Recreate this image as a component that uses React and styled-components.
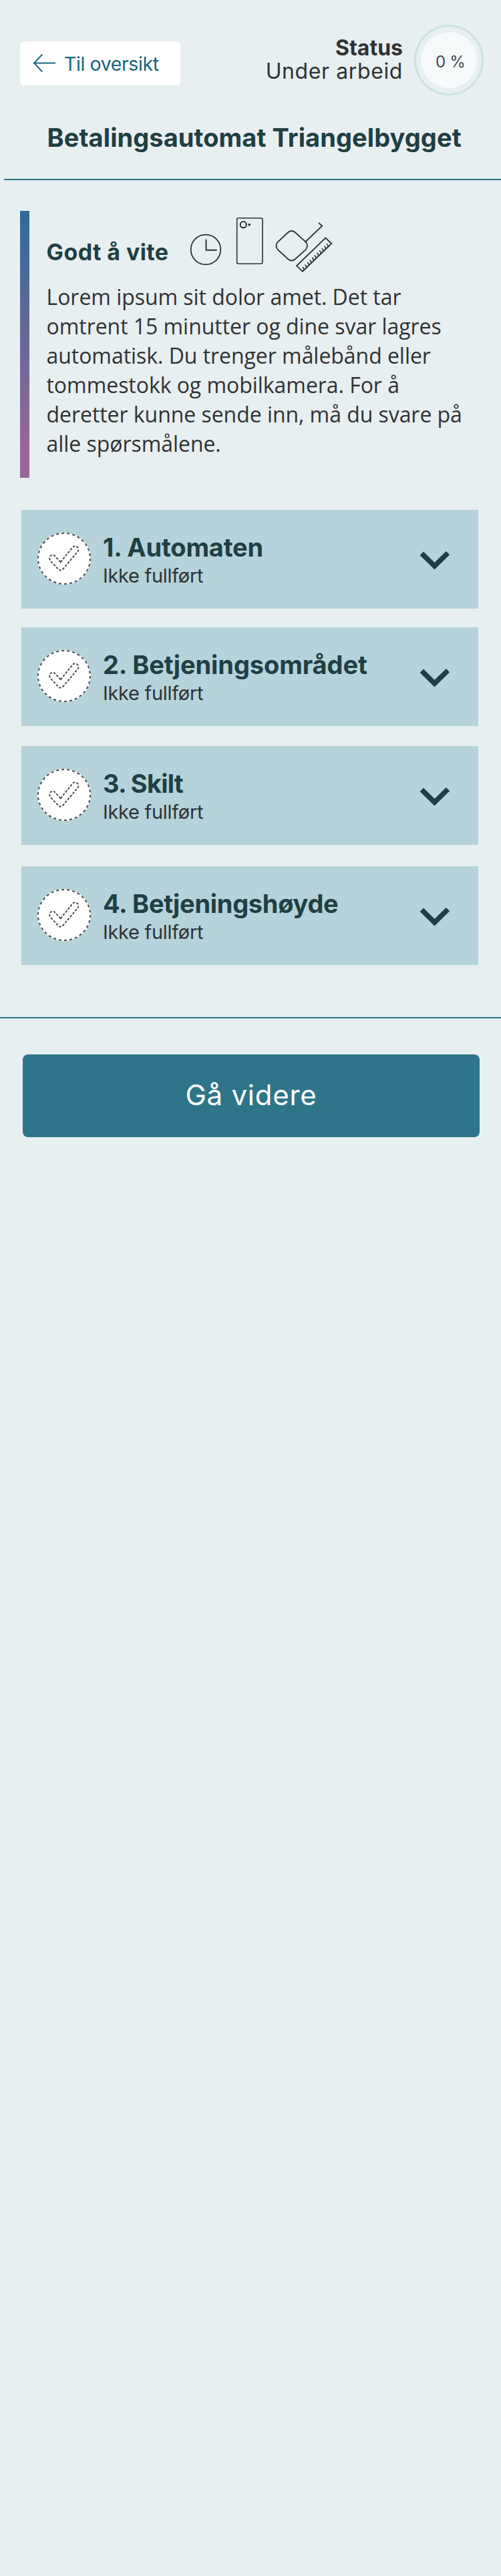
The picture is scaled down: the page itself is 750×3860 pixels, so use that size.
import React from "react";
import styled, { createGlobalStyle } from "styled-components";

const display = `"Inter", "Liberation Sans", sans-serif`;
const bodyFont = `"Open Sans", "Noto Sans", sans-serif`;

const color = {
  page: "#e7eff1",
  panel: "#b6d2da",
  teal: "#2e758a",
  link: "#11677f",
  heading: "#203f43",
  text: "#303233",
};

const GlobalStyle = createGlobalStyle`
  * { box-sizing: border-box; }
  body { margin: 0; background: ${color.page}; }
  svg { display: block; flex: none; }
`;

const Page = styled.main`
  min-height: 3860px;
  background: ${color.page};
  color: ${color.text};
  font-family: ${display};
`;

const TopBar = styled.header`
  display: flex;
  align-items: flex-start;
  height: 143px;
  padding: 37px 26px 0 30px;
`;

const BackButton = styled.button`
  display: flex;
  align-items: center;
  width: 240px;
  height: 66px;
  margin-top: 25px;
  padding: 0 0 0 19px;
  gap: 12px;
  border: 0;
  border-radius: 6px;
  background: #fff;
  color: ${color.link};
  font: 400 28.5px/40px ${display};
  letter-spacing: -0.4px;
  white-space: nowrap;
`;

const BackLabel = styled.span`
  padding-top: 2px;
`;

const Status = styled.div`
  display: flex;
  flex-direction: column;
  align-items: flex-end;
  margin: 18px 17px 0 auto;
  font-size: 32px;
  line-height: 34.5px;
`;

const StatusTitle = styled.strong`
  font-weight: 700;
`;

const StatusValue = styled.span`
  letter-spacing: 0.6px;
`;

const Ring = styled.div`
  display: flex;
  flex: none;
  width: 104px;
  height: 106px;
  padding: 8px 7px;
  border: 3px solid #c9e2e4;
  border-radius: 50%;
`;

const RingCore = styled.div`
  display: flex;
  flex: 1;
  align-items: center;
  justify-content: center;
  padding: 5px 0 0 4px;
  border-radius: 50%;
  background: #f6fafb;
  color: #4a4b4c;
  font-size: 24px;
  letter-spacing: -0.9px;
  word-spacing: 1px;
  white-space: nowrap;
`;

const Title = styled.h1`
  margin: 40px 0 39px;
  padding-left: 70.5px;
  color: ${color.heading};
  font-size: 38px;
  font-weight: 700;
  line-height: 46px;
  letter-spacing: 0.08px;
  white-space: nowrap;
`;

const Rule = styled.hr`
  height: 2px;
  margin: 0 0 0 ${(p) => p.$inset || 0}px;
  border: 0;
  background: ${color.teal};
`;

const Info = styled.section`
  display: flex;
  height: 400px;
  margin: 46px 0 0 30px;
`;

const InfoAccent = styled.div`
  flex: none;
  width: 14px;
  background: linear-gradient(#2f6a9a, #9b6699 92%);
`;

const InfoBody = styled.div`
  padding-left: 25.5px;
`;

const InfoHead = styled.div`
  display: flex;
  align-items: flex-start;
  height: 106.5px;
`;

const InfoTitle = styled.h2`
  width: 214.5px;
  margin: 42px 0 0;
  color: ${color.heading};
  font-size: 34px;
  font-weight: 700;
  line-height: 40px;
  letter-spacing: 0.4px;
  white-space: nowrap;
`;

const InfoText = styled.p`
  margin: 0;
  font: 400 32px/44px ${bodyFont};
  letter-spacing: -0.05px;
  white-space: nowrap;
`;

const Sections = styled.div`
  display: flex;
  flex-direction: column;
  padding: 48px 34px 78px 32px;
`;

const Section = styled.section`
  display: flex;
  align-items: flex-start;
  height: 148px;
  margin-bottom: ${(p) => p.$after}px;
  padding: 34px 42px 0 24px;
  background: ${color.panel};
`;

const SectionText = styled.div`
  flex: 1;
  padding-left: 18px;
`;

const SectionTitle = styled.h3`
  margin: 0;
  color: ${color.heading};
  font-size: 38px;
  font-weight: 700;
  line-height: 45px;
  letter-spacing: ${(p) => p.$tracking}px;
  white-space: nowrap;
`;

const SectionState = styled.div`
  padding-top: 2px;
  font-size: 29px;
  line-height: 36px;
  letter-spacing: -0.3px;
`;

const ChevronSlot = styled.div`
  padding-top: 27px;
`;

const NextButton = styled.button`
  display: flex;
  align-items: center;
  justify-content: center;
  width: 684px;
  height: 124px;
  margin: 54px 0 0 34px;
  padding: 0 0 2px;
  border: 0;
  border-radius: 8px;
  background: ${color.teal};
  color: #fff;
  font: 400 42px/52px ${display};
  letter-spacing: 0.75px;
`;

const ArrowLeft = () => (
  <svg width="35" height="28" viewBox="0 0 35 28" fill="none" stroke={color.link} strokeWidth="1.9">
    <path d="M34 13.500H2M14.300 0.500L2 13.500l12.300 13" />
  </svg>
);

const ClockIcon = styled(({ className }) => (
  <svg className={className} width="48" height="48" viewBox="0 0 48 48" fill="none" stroke={color.text} strokeWidth="1.8">
    <circle cx="24" cy="24" r="22.300" />
    <path d="M24.500 9.500v15.300H40" strokeLinecap="round" strokeWidth="2" />
  </svg>
))`
  margin-top: 34px;
`;

const PhoneIcon = styled(({ className }) => (
  <svg className={className} width="42" height="72" viewBox="0 0 42 72" fill="none" stroke={color.text}>
    <rect x="1.700" y="1.700" width="38.300" height="68.500" rx="2.500" strokeWidth="1.600" />
    <circle cx="11.300" cy="11.700" r="4.600" strokeWidth="2" />
    <circle cx="20.200" cy="11.700" r="1.900" fill={color.text} stroke="none" />
  </svg>
))`
  margin: 9px 0 0 21px;
`;

const teeth = Array.from({ length: 11 }, (_, i) => i);

const ToolsIcon = styled(({ className }) => (
  <svg className={className} width="90" height="84" viewBox="410 326 90 84" fill="none" stroke={color.text} strokeWidth="1.8">
    <path d="M431.500 348L415.600 362.800Q411.300 368.300 415.600 373.800L431.500 388.500Q436.500 392.600 441.500 388.500L458 373.800Q462 368.300 458 362.800L441.500 348Q436.500 343.900 431.500 348Z" />
    <path d="M456.500 363L482.300 338.500L477 334" />
    <path d="M487.300 356.500L496.300 365L453 406.700L444 398.300Z" />
    {teeth.map((i) => (
      <path key={i} d={`M${454.5 + i * 3.6} ${404.8 - i * 3.48}q1.200 -3.200 -1.700 -4.600`} strokeWidth="1.600" />
    ))}
  </svg>
))`
  margin: 10px 0 0 15px;
`;

const CheckBadge = () => (
  <svg width="80" height="78" viewBox="0 0 80 78" fill="none" stroke="#4c4c4c" strokeWidth="2">
    <ellipse cx="40" cy="39" rx="40" ry="39" fill="#fff" stroke="none" />
    <ellipse cx="40" cy="39" rx="39" ry="38" strokeDasharray="4 4.060" />
    <path
      d="M34.700 44.300L52.500 22.300C57.500 17 64.500 23.500 60 29L38.500 54.500C36 57.200 33.500 57.200 31 54.800L20 43C14.500 36.500 22.500 30.500 26.500 35.500Z"
      strokeDasharray="3.600 2.200"
    />
  </svg>
);

const ChevronDown = () => (
  <svg width="46" height="30" viewBox="0 0 46 30" fill="none" stroke={color.heading} strokeWidth="7.600">
    <path d="M3.300 4.200L22.500 23.200L42.500 3.600" />
  </svg>
);

const sections = [
  { title: "1. Automaten", tracking: -0.2, after: 28 },
  { title: "2. Betjeningsområdet", tracking: -0.1, after: 30 },
  { title: "3. Skilt", tracking: -0.8, after: 32 },
  { title: "4. Betjeningshøyde", tracking: -0.3, after: 0 },
];

export default function App() {
  return (
    <Page>
      <GlobalStyle />
      <TopBar>
        <BackButton>
          <ArrowLeft />
          <BackLabel>Til oversikt</BackLabel>
        </BackButton>
        <Status>
          <StatusTitle>Status</StatusTitle>
          <StatusValue>Under arbeid</StatusValue>
        </Status>
        <Ring>
          <RingCore>0 %</RingCore>
        </Ring>
      </TopBar>
      <Title>Betalingsautomat Triangelbygget</Title>
      <Rule $inset={6} />
      <Info>
        <InfoAccent />
        <InfoBody>
          <InfoHead>
            <InfoTitle>Godt å vite</InfoTitle>
            <ClockIcon />
            <PhoneIcon />
            <ToolsIcon />
          </InfoHead>
          <InfoText>
            Lorem ipsum sit dolor amet. Det tar<br />
            omtrent 15 minutter og dine svar lagres<br />
            automatisk. Du trenger målebånd eller<br />
            tommestokk og mobilkamera. For å<br />
            deretter kunne sende inn, må du svare på<br />
            alle spørsmålene.
          </InfoText>
        </InfoBody>
      </Info>
      <Sections>
        {sections.map((s) => (
          <Section key={s.title} $after={s.after}>
            <CheckBadge />
            <SectionText>
              <SectionTitle $tracking={s.tracking}>{s.title}</SectionTitle>
              <SectionState>Ikke fullført</SectionState>
            </SectionText>
            <ChevronSlot>
              <ChevronDown />
            </ChevronSlot>
          </Section>
        ))}
      </Sections>
      <Rule />
      <NextButton>Gå videre</NextButton>
    </Page>
  );
}
